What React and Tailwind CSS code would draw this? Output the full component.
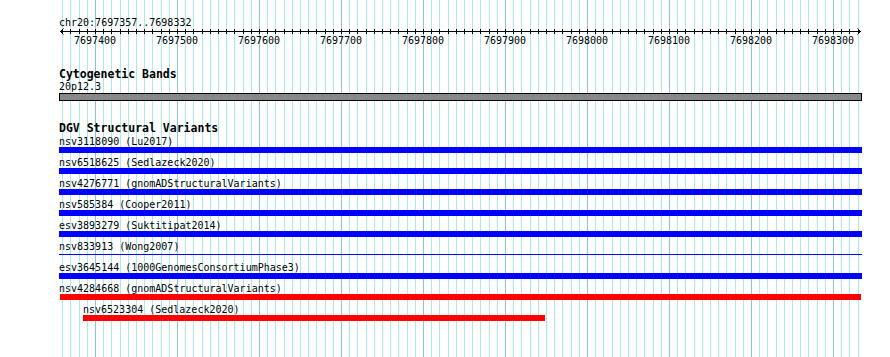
import React from "react";

const bpToX = (bp) => Math.round(95 + (bp - 7697400) * 0.82);

const gridLines = [];
for (let bp = 7697360; bp <= 7698330; bp += 10) {
  gridLines.push({ x: bpToX(bp), major: bp % 100 === 0 });
}
const majors = [];
for (let bp = 7697400; bp <= 7698300; bp += 100) majors.push(bp);

const rows = [
  { label: "nsv3118090 (Lu2017)", bar: "bg-[#0000ff] h-[6px] w-[803px]", wrap: "ml-0" },
  { label: "nsv6518625 (Sedlazeck2020)", bar: "bg-[#0000ff] h-[6px] w-[803px]", wrap: "ml-0" },
  { label: "nsv4276771 (gnomADStructuralVariants)", bar: "bg-[#0000ff] h-[6px] w-[803px]", wrap: "ml-0" },
  { label: "nsv585384 (Cooper2011)", bar: "bg-[#0000ff] h-[6px] w-[803px]", wrap: "ml-0" },
  { label: "esv3893279 (Suktitipat2014)", bar: "bg-[#0000ff] h-[6px] w-[803px]", wrap: "ml-0" },
  { label: "nsv833913 (Wong2007)", thin: true, wrap: "ml-0" },
  { label: "esv3645144 (1000GenomesConsortiumPhase3)", bar: "bg-[#0000ff] h-[6px] w-[803px]", wrap: "ml-0" },
  { label: "nsv4284668 (gnomADStructuralVariants)", bar: "bg-[#ff0000] h-[6px] w-[801px] ml-[1px]", wrap: "ml-0" },
  { label: "nsv6523304 (Sedlazeck2020)", bar: "bg-[#ff0000] h-[6px] w-[462px]", wrap: "ml-[24px]" },
];

const mono = "font-['DejaVu_Sans_Mono',monospace]";

export default function App() {
  return (
    <div className={`relative w-[890px] h-[357px] overflow-hidden bg-white text-black ${mono}`}>
      {/* guideline grid drawn behind the tracks */}
      <svg className="absolute inset-0" width="890" height="357" aria-hidden="true">
        {gridLines.map((g, i) => (
          <line
            key={i}
            x1={g.x + 0.5}
            x2={g.x + 0.5}
            y1={0}
            y2={357}
            stroke={g.major ? "#8cc3e3" : "#a9e9ef"}
            strokeWidth="1"
          />
        ))}
      </svg>

      <div className="relative ml-[59px] w-[803px] flex flex-col">
        {/* ruler */}
        <div className="mt-[17px] text-[10px] leading-[11px] whitespace-nowrap">chr20:7697357..7698332</div>
        <svg width="803" height="7" className="block" aria-hidden="true">
          <line x1="1" x2="802" y1="3.5" y2="3.5" stroke="#000" strokeWidth="1" />
          {gridLines.map((g, i) => (
            <line key={i} x1={g.x + 0.5 - 59} x2={g.x + 0.5 - 59} y1="1" y2="6" stroke="#000" strokeWidth="1" />
          ))}
          <polyline points="4.5,0.5 1.5,3.5 4.5,6.5" fill="none" stroke="#000" strokeWidth="1" />
          <polyline points="798.5,0.5 801.5,3.5 798.5,6.5" fill="none" stroke="#000" strokeWidth="1" />
        </svg>
        <div className="relative h-[11px] text-[10px] leading-[11px]">
          {majors.map((bp) => (
            <span
              key={bp}
              className="absolute top-0 whitespace-nowrap"
              style={{ left: bpToX(bp) - 21 - 59 }}
            >
              {bp}
            </span>
          ))}
        </div>

        {/* Cytogenetic bands */}
        <div className="mt-[22px] text-[11.5px] leading-[12px] font-bold whitespace-nowrap">Cytogenetic Bands</div>
        <div className="mt-[1px] text-[10px] leading-[11px] whitespace-nowrap">20p12.3</div>
        <div className="mt-[1px] h-[8px] w-[803px] border border-black bg-[#888888]" />

        {/* DGV */}
        <div className="mt-[21px] text-[11.5px] leading-[12px] font-bold whitespace-nowrap">DGV Structural Variants</div>
        <div className="mt-[2px] flex flex-col gap-[4px]">
          {rows.map((r, i) => (
            <div key={i} className={`flex flex-col ${r.wrap}`}>
              <div className="text-[10px] leading-[11px] whitespace-nowrap">{r.label}</div>
              {r.thin ? (
                <div className="h-[6px] pt-[2px]">
                  <div className="h-[1px] w-[803px] bg-[#0000ff]" />
                </div>
              ) : (
                <div className={r.bar} />
              )}
            </div>
          ))}
        </div>
      </div>
    </div>
  );
}
